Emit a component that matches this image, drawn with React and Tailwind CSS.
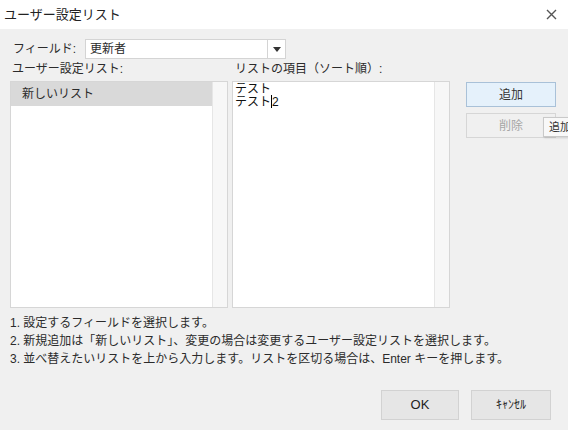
const FONT = "font-['Liberation_Sans','Noto_Sans_CJK_JP',sans-serif]";

function CloseIcon() {
    return (
        <svg width="11" height="11" viewBox="0 0 11 11" className="block">
            <path d="M1 1L10 10M10 1L1 10" stroke="#555" strokeWidth="1.4" />
        </svg>
    );
}

function Scrollbar() {
    return <div className="w-[15px] h-full bg-[#f7f7f7] border-l border-[#e6e6e6] shrink-0" />;
}

export default function App() {
    return (
        <div className={`relative w-[568px] h-[430px] overflow-hidden bg-[#f0f0f0] text-[#2b2b2b] ${FONT}`}>
            {/* title bar */}
            <div className="h-[29px] bg-white flex items-center justify-between pl-[4px] pr-[11px]">
                <span className="text-[13px] leading-none text-[#222]">ユーザー設定リスト</span>
                <CloseIcon />
            </div>

            <div className="px-[10px]">
                {/* field row */}
                <div className="mt-[10px] flex items-center h-[20px]">
                    <span className="w-[75px] pl-[3px] text-[12px] leading-none">フィールド:</span>
                    <div className="w-[201px] h-[20px] bg-white border border-[#d4d4d4] flex items-center">
                        <span className="flex-1 pl-[4px] text-[12px] leading-none">更新者</span>
                        <div className="w-[18px] h-full border-l border-[#d4d4d4] flex items-center justify-center">
                            <svg width="8" height="5" viewBox="0 0 8 5" className="block">
                                <path d="M0 0H8L4 5Z" fill="#333" />
                            </svg>
                        </div>
                    </div>
                </div>

                {/* column labels */}
                <div className="mt-[2px] flex text-[12px] leading-[16px]">
                    <span className="w-[225px] pl-[2px]">ユーザー設定リスト:</span>
                    <span>リストの項目（ソート順）:</span>
                </div>

                {/* lists */}
                <div className="mt-[4px] flex h-[227px]">
                    <div className="w-[218px] h-full bg-white border border-[#d6d6d6] flex">
                        <div className="flex-1">
                            <div className="h-[24px] bg-[#d9d9d9] flex items-center pl-[11px] text-[12px] leading-none">
                                新しいリスト
                            </div>
                        </div>
                        <Scrollbar />
                    </div>

                    <div className="ml-[4px] w-[218px] h-full bg-white border border-[#d6d6d6] flex">
                        <div className="flex-1 pl-[2px] pt-[1px] text-[12px] leading-[12px] text-[#111]">
                            <div>テスト</div>
                            <div className="flex items-center">
                                テスト<span className="inline-block w-px h-[13px] bg-black" />2
                            </div>
                        </div>
                        <Scrollbar />
                    </div>

                    <div className="ml-[16px] flex flex-col gap-[6px] pt-[1px]">
                        <button className="w-[90px] h-[25px] bg-[#e5f1fb] border border-[#a9c1d8] text-[12px] text-[#333]">
                            追加
                        </button>
                        <button className="w-[90px] h-[25px] bg-[#f0f0f0] border border-[#d6d6d6] text-[12px] text-[#a6a6a6]">
                            削除
                        </button>
                    </div>
                </div>

                {/* instructions */}
                <div className="mt-[6px] text-[12px] leading-[18px] text-[#2b2b2b]">
                    <div>1. 設定するフィールドを選択します。</div>
                    <div>2. 新規追加は「新しいリスト」、変更の場合は変更するユーザー設定リストを選択します。</div>
                    <div>3. 並べ替えたいリストを上から入力します。リストを区切る場合は、Enter キーを押します。</div>
                </div>

                {/* footer buttons */}
                <div className="mt-[22px] flex justify-end pr-[7px] gap-[12px]">
                    <button className="w-[78px] h-[30px] bg-[#e6e6e6] border border-[#d2d2d2] text-[13px] text-[#222]">
                        OK
                    </button>
                    <button className="w-[80px] h-[30px] bg-[#e6e6e6] border border-[#d2d2d2] text-[12px] text-[#222]">
                        ｷｬﾝｾﾙ
                    </button>
                </div>
            </div>

            {/* tooltip */}
            <div className="absolute left-[543px] top-[117px] w-[32px] h-[20px] bg-[#f8f8f8] border border-[#c9c9c9] shadow-[1px_1px_2px_rgba(0,0,0,0.15)] flex items-center pl-[5px] text-[11px] leading-none text-[#333]">
                追加
            </div>
        </div>
    );
}
